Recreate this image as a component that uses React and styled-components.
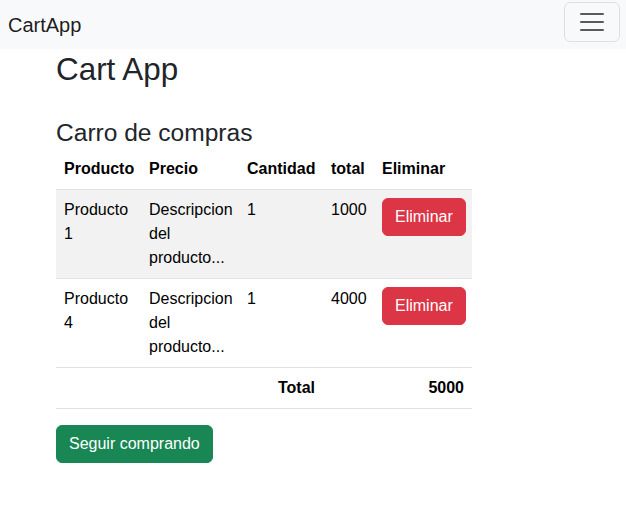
import React from "react";
import styled, { createGlobalStyle } from "styled-components";

const Global = createGlobalStyle`
  * { box-sizing: border-box; }
  body {
    margin: 0;
    font-family: "Liberation Sans", Arial, sans-serif;
    font-size: 16px;
    line-height: 1.5;
    color: #212529;
    background: #fff;
  }
`;

const Navbar = styled.nav`
  display: flex;
  justify-content: space-between;
  align-items: center;
  height: 49px;
  padding: 0 6px 5px 8px;
  background: #f8f9fa;
`;

const Brand = styled.a`
  font-size: 20px;
  line-height: 30px;
  padding-top: 6px;
  color: rgba(0, 0, 0, 0.9);
  text-decoration: none;
`;

const Toggler = styled.button`
  display: flex;
  align-items: center;
  justify-content: center;
  width: 56px;
  height: 40px;
  padding: 4px 12px;
  background: transparent;
  border: 1px solid rgba(0, 0, 0, 0.1);
  border-radius: 6px;
`;

const Container = styled.main`
  width: 540px;
  margin: 0 auto;
  padding: 0 12px 0 13px;
`;

const Title = styled.h1`
  margin: 2px 0 8px;
  font-size: 31.4px;
  line-height: 1.2;
  font-weight: 500;
  color: #212529;
`;

const Subtitle = styled.h3`
  margin: 29px 0 2px;
  font-size: 24.56px;
  line-height: 1.2;
  font-weight: 500;
  color: #212529;
`;

const Table = styled.table`
  width: 416px;
  table-layout: fixed;
  border-collapse: collapse;
  margin-bottom: 16px;
  color: #000;
`;

const Th = styled.th`
  padding: 8px;
  text-align: left;
  font-weight: 700;
  vertical-align: bottom;
  border-bottom: 1px solid #dee2e6;
`;

const Row = styled.tr`
  background: ${(p) => (p.$striped ? "#f2f2f2" : "#fff")};
`;

const Td = styled.td`
  padding: 8px;
  vertical-align: top;
  text-align: ${(p) => (p.$end ? "right" : "left")};
  font-weight: ${(p) => (p.$bold ? 700 : 400)};
  border-bottom: 1px solid #dee2e6;
`;

const Button = styled.button`
  display: inline-block;
  padding: 6px 12px;
  font-family: inherit;
  font-size: 16px;
  line-height: 24px;
  color: #fff;
  background: ${(p) => p.$bg};
  border: 1px solid ${(p) => p.$bg};
  border-radius: 6px;
  cursor: pointer;
`;

const items = [
  { name: "Producto 1", desc: "Descripcion del producto...", qty: 1, total: 1000 },
  { name: "Producto 4", desc: "Descripcion del producto...", qty: 1, total: 4000 },
];

export default function App() {
  return (
    <>
      <Global />
      <Navbar>
        <Brand href="#">CartApp</Brand>
        <Toggler aria-label="menu">
          <svg width="30" height="30" viewBox="0 0 30 30">
            <path
              d="M4 7h22M4 15h22M4 23h22"
              stroke="rgba(33,37,41,0.75)"
              strokeWidth="2"
              strokeLinecap="round"
              strokeMiterlimit="10"
            />
          </svg>
        </Toggler>
      </Navbar>
      <Container>
        <Title>Cart App</Title>
        <Subtitle>Carro de compras</Subtitle>
        <Table>
          <colgroup>
            <col style={{ width: 85 }} />
            <col style={{ width: 98 }} />
            <col style={{ width: 84 }} />
            <col style={{ width: 51 }} />
            <col style={{ width: 98 }} />
          </colgroup>
          <thead>
            <tr>
              <Th>Producto</Th>
              <Th>Precio</Th>
              <Th>Cantidad</Th>
              <Th>total</Th>
              <Th>Eliminar</Th>
            </tr>
          </thead>
          <tbody>
            {items.map((it, i) => (
              <Row key={it.name} $striped={i % 2 === 0}>
                <Td>{it.name}</Td>
                <Td>{it.desc}</Td>
                <Td>{it.qty}</Td>
                <Td>{it.total}</Td>
                <Td>
                  <Button $bg="#dc3545">Eliminar</Button>
                </Td>
              </Row>
            ))}
          </tbody>
          <tfoot>
            <tr>
              <Td colSpan={3} $end $bold>Total</Td>
              <Td colSpan={2} $end $bold>5000</Td>
            </tr>
          </tfoot>
        </Table>
        <Button $bg="#198754">Seguir comprando</Button>
      </Container>
    </>
  );
}
